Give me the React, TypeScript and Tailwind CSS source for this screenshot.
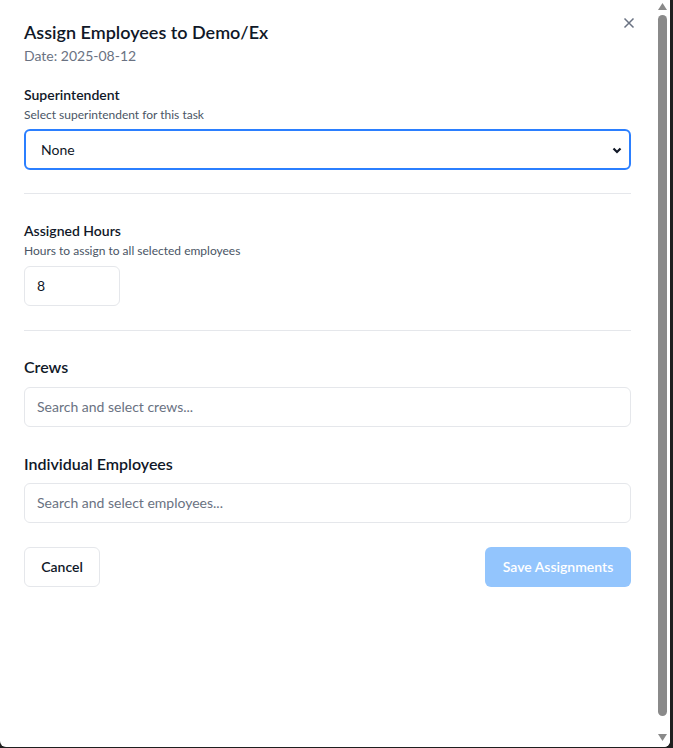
import React from 'react'

function Scrollbar() {
  return (
    <div className="flex w-[15px] flex-col items-center bg-white pt-[3px] pb-[6px]">
      <svg width="9" height="7" viewBox="0 0 9 7" className="shrink-0">
        <path d="M4.5 0 L9 7 L0 7 Z" fill="#8a8a8a" />
      </svg>
      <div className="mt-[5px] w-[9px] flex-1 rounded-full bg-[#8a8a8a]" />
      <div className="h-[18px]" />
      <svg width="9" height="7" viewBox="0 0 9 7" className="shrink-0">
        <path d="M0 0 L9 0 L4.5 7 Z" fill="#8a8a8a" />
      </svg>
    </div>
  )
}

function App() {
  return (
    <div className="h-[748px] w-[673px] bg-[#1f1f1f]" style={{ fontFamily: 'Lato, "Noto Sans", sans-serif' }}>
      <div className="flex h-[747px] w-[670px] overflow-hidden rounded-b-md bg-white">
        <div className="relative flex-1 pl-6 pr-6">
          <button className="absolute right-[18px] top-[15px] text-gray-500">
            <svg width="16" height="16" viewBox="0 0 16 16" fill="none" stroke="currentColor" strokeWidth="1.5">
              <path d="M3.5 3.5 L12.5 12.5 M12.5 3.5 L3.5 12.5" />
            </svg>
          </button>

          <h2 className="mt-[18px] text-lg font-semibold leading-7 text-gray-900">Assign Employees to Demo/Ex</h2>
          <p className="text-sm leading-5 text-gray-500">Date: 2025-08-12</p>

          <div className="mt-[19px]">
            <label className="block text-sm font-semibold leading-5 text-gray-900">Superintendent</label>
            <p className="mt-0.5 text-xs leading-4 text-gray-600">Select superintendent for this task</p>
            <div className="relative mt-[6px] flex h-[41px] items-center rounded-md border-2 border-blue-500 pl-[15px] pr-3 text-sm text-gray-900">
              <span>None</span>
              <svg className="absolute right-[6px] top-1/2 -translate-y-1/2" width="12" height="12" viewBox="0 0 12 12" fill="none" stroke="#111827" strokeWidth="2.2">
                <path d="M2.5 4.5 L6 8 L9.5 4.5" />
              </svg>
            </div>
          </div>

          <div className="mt-[23px] h-px bg-gray-200" />

          <div className="mt-[27px]">
            <label className="block text-sm font-semibold leading-5 text-gray-900">Assigned Hours</label>
            <p className="mt-0.5 text-xs leading-4 text-gray-600">Hours to assign to all selected employees</p>
            <div className="mt-[7px] flex h-10 w-24 items-center rounded-md border border-gray-200 pl-3 text-sm text-gray-900">8</div>
          </div>

          <div className="mt-6 h-px bg-gray-200" />

          <div className="mt-6">
            <label className="block text-base font-semibold leading-6 text-gray-900">Crews</label>
            <div className="mt-2 flex h-10 items-center rounded-md border border-gray-200 pl-3 text-sm text-gray-500">Search and select crews...</div>
          </div>

          <div className="mt-[25px]">
            <label className="block text-base font-semibold leading-6 text-gray-900">Individual Employees</label>
            <div className="mt-[7px] flex h-10 items-center rounded-md border border-gray-200 pl-3 text-sm text-gray-500">Search and select employees...</div>
          </div>

          <div className="mt-6 flex justify-between">
            <button className="h-10 w-[76px] rounded-md border border-gray-200 text-sm font-semibold text-gray-900">Cancel</button>
            <button className="h-10 w-[146px] rounded-md bg-[#93c5fd] text-sm font-semibold text-white">Save Assignments</button>
          </div>
        </div>
        <Scrollbar />
      </div>
    </div>
  )
}

export default App
